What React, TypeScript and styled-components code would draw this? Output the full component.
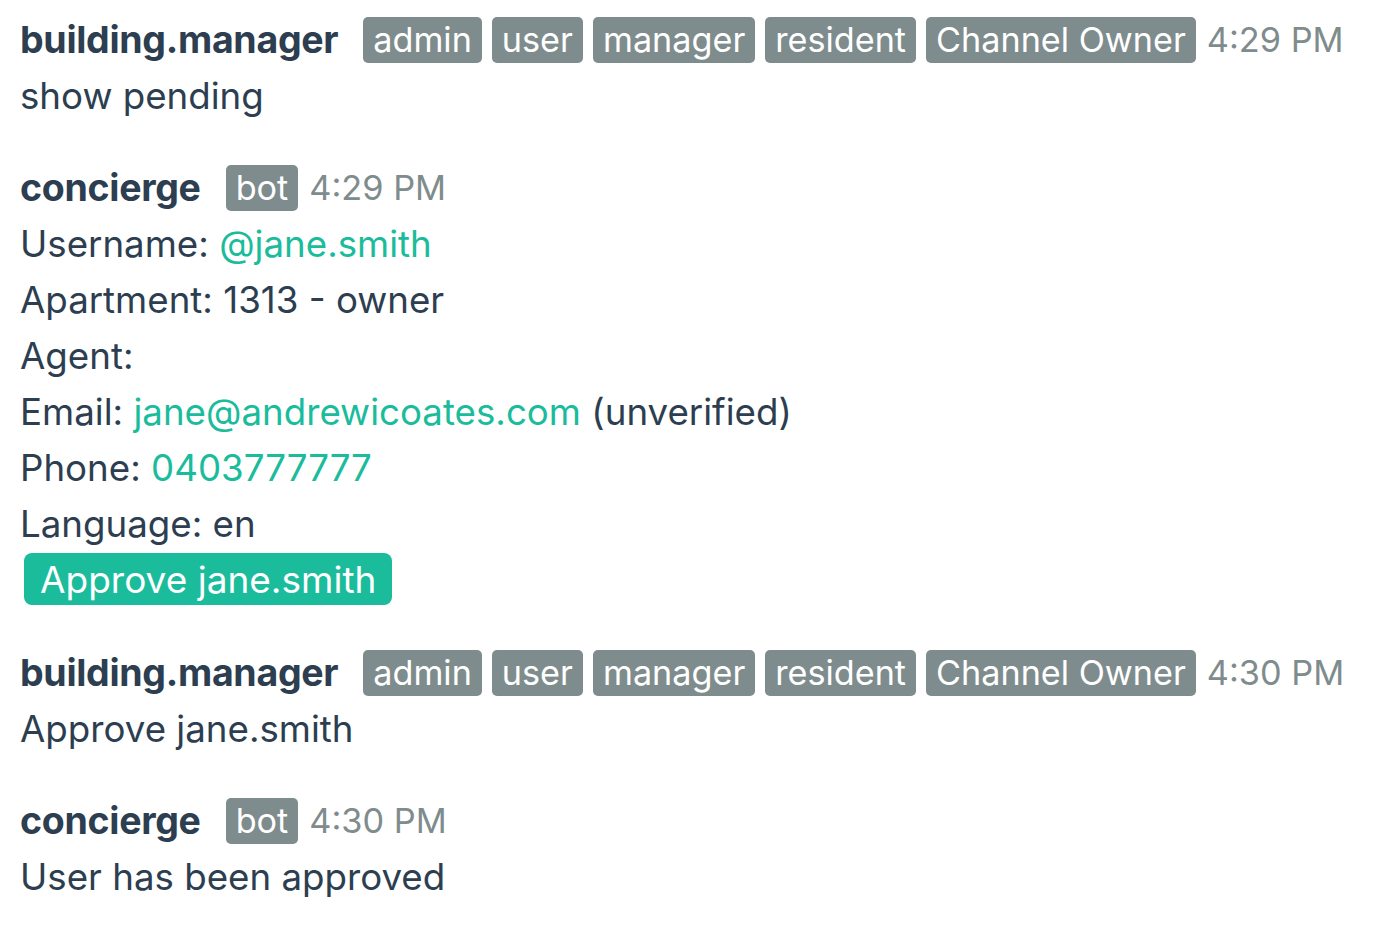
import React from "react";
import styled, { createGlobalStyle } from "styled-components";

const Global = createGlobalStyle`
  html, body { margin: 0; padding: 0; background: #ffffff; }
  body { font-family: Inter, "Noto Sans", "Liberation Sans", sans-serif; color: #2c3e50; }
`;

const Page = styled.div`
  display: flex;
  flex-direction: column;
  gap: 35px;
  padding: 11px 20px;
`;

const Message = styled.div`
  display: flex;
  flex-direction: column;
`;

const Header = styled.div`
  display: flex;
  align-items: center;
  gap: 10px;
  height: 57px;
  white-space: nowrap;
`;

const Name = styled.span`
  font-weight: 700;
  font-size: 37.5px;
  color: #2c3e50;
  margin-right: 15px;
  letter-spacing: -0.3px;
`;

const Badge = styled.span`
  display: inline-flex;
  align-items: center;
  height: 46px;
  padding: 0 10px;
  border-radius: 5px;
  background: #7f8c8d;
  color: #ffffff;
  font-size: 34.2px;
`;

const Time = styled.span`
  color: #7f8c8d;
  font-size: 34.3px;
  margin-left: 1px;
`;

const Line = styled.div`
  font-size: 36.7px;
  line-height: 56px;
  color: #2c3e50;
  white-space: nowrap;
`;

const Link = styled.span`
  color: #1abc9c;
`;

const ActionButton = styled.button`
  align-self: flex-start;
  margin: 1px 0 4px 4px;
  height: 52px;
  padding: 0 16px;
  border: none;
  border-radius: 8px;
  background: #1abc9c;
  color: #ffffff;
  font-family: inherit;
  font-size: 37px;
  cursor: pointer;
`;

const managerRoles = ["admin", "user", "manager", "resident", "Channel Owner"];

const MsgHeader: React.FC<{ name: string; roles: string[]; time: string }> = ({ name, roles, time }) => (
  <Header>
    <Name>{name}</Name>
    {roles.map((r) => (
      <Badge key={r}>{r}</Badge>
    ))}
    <Time>{time}</Time>
  </Header>
);

export default function App() {
  return (
    <>
      <Global />
      <Page>
        <Message>
          <MsgHeader name="building.manager" roles={managerRoles} time="4:29 PM" />
          <Line>show pending</Line>
        </Message>
        <Message>
          <MsgHeader name="concierge" roles={["bot"]} time="4:29 PM" />
          <Line>
            Username: <Link>@jane.smith</Link>
          </Line>
          <Line>Apartment: 1313 - owner</Line>
          <Line>Agent:</Line>
          <Line>
            Email: <Link>jane@andrewicoates.com</Link> (unverified)
          </Line>
          <Line>
            Phone: <Link>0403777777</Link>
          </Line>
          <Line>Language: en</Line>
          <ActionButton>Approve jane.smith</ActionButton>
        </Message>
        <Message>
          <MsgHeader name="building.manager" roles={managerRoles} time="4:30 PM" />
          <Line>Approve jane.smith</Line>
        </Message>
        <Message>
          <MsgHeader name="concierge" roles={["bot"]} time="4:30 PM" />
          <Line>User has been approved</Line>
        </Message>
      </Page>
    </>
  );
}
